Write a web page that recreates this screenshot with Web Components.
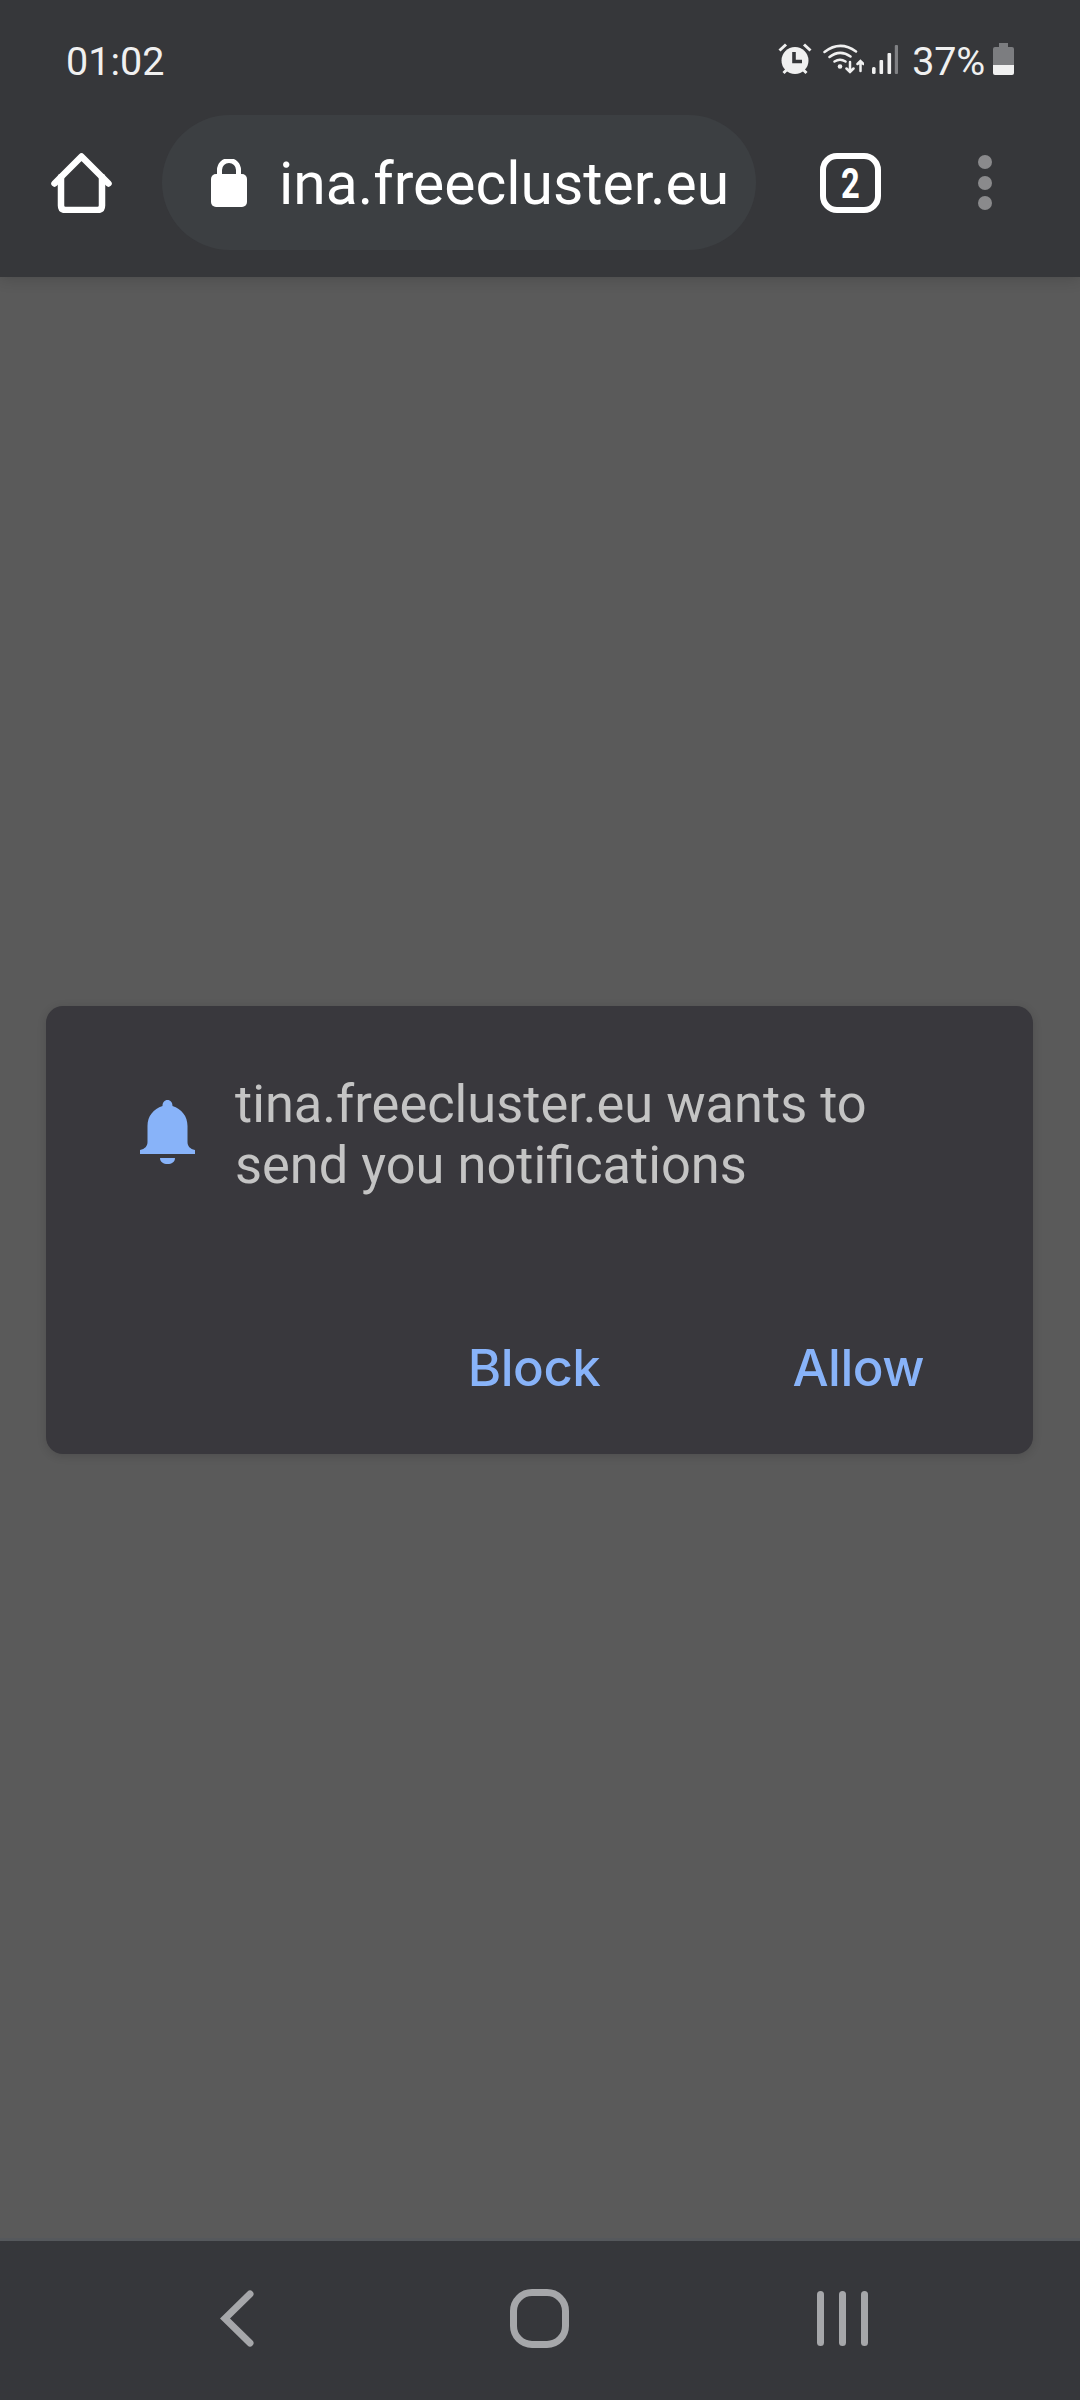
<!DOCTYPE html>
<html lang="en">
<head>
<meta charset="utf-8">
<title>Notification permission</title>
<style>
html,body{margin:0;padding:0;width:1080px;height:2400px;overflow:hidden;background:#5a5a5a;font-family:Roboto,"Liberation Sans",sans-serif}
body{display:flex;flex-direction:column}
</style>
</head>
<body>
<browser-chrome>
  <status-bar time="01:02" battery="37%"></status-bar>
  <browser-toolbar url="ina.freecluster.eu" tabs="2"></browser-toolbar>
</browser-chrome>
<page-area>
  <permission-dialog>
    <span slot="message">tina.freecluster.eu wants to send you notifications</span>
    <dialog-button slot="actions" style="margin-right:192px">Block</dialog-button>
    <dialog-button slot="actions">Allow</dialog-button>
  </permission-dialog>
</page-area>
<nav-bar></nav-bar>
<script>
function def(name, render){
  customElements.define(name, class extends HTMLElement{
    connectedCallback(){
      if(this.shadowRoot) return;
      this.attachShadow({mode:'open'}).innerHTML = render(this);
    }
  });
}
def('browser-chrome', () => `<style>
:host{display:block;background:#36373a;position:relative;z-index:1;box-shadow:0 2px 14px rgba(0,0,0,.16)}
</style><slot></slot>`);

def('status-bar', el => `<style>
:host{display:flex;align-items:flex-start;height:115px;box-sizing:border-box;padding:0 66px 0 66px;color:#f0f0f0}
.time{font-size:39.500px;line-height:44px;margin-top:39.500px;flex:1}
.icons{display:flex;align-items:flex-start;margin-top:43px}
svg{display:block}
.pct{font-size:39.500px;line-height:44px;margin:-3.500px 8px 0 14px;letter-spacing:-.2px}
</style>
<span class="time">${el.getAttribute('time')}</span>
<div class="icons">
<svg width="34" height="32" viewBox="0 0 34 32" fill="none" stroke="#f0f0f0" stroke-width="3">
  <path d="M1.5 7.5 8 1.5M26 1.5l6.5 6M5.5 30l3.5-3.5M28.500 30 25 26.500"/>
  <circle cx="17" cy="17.500" r="13.500" fill="#f0f0f0" stroke="none"/>
  <path d="M16 9v9.500h8" stroke="#36373a" stroke-width="3.600"/>
</svg>
<svg style="margin-left:11px" width="41" height="32" viewBox="0 0 41 32" fill="none" stroke="#f0f0f0" stroke-width="2.500" stroke-linecap="round">
  <path d="M1.500 9Q17-3 33 8.500M6.500 14Q17 6 27.500 13.500M11.500 18.500Q17 15 22.500 18.500"/>
  <circle cx="17" cy="23.500" r="2.300" fill="#f0f0f0" stroke="none"/>
  <path d="M27 19v10M23.500 25.500 27 29l3.500-3.500M37.500 28V18M34.500 21l3-3 3 3"/>
</svg>
<svg style="margin-left:8px" width="26" height="32" viewBox="0 0 26 32">
  <rect x="0" y="24" width="3.600" height="7" rx="1.500" fill="#f0f0f0"/>
  <rect x="7.500" y="17" width="3.600" height="14" rx="1" fill="#f0f0f0"/>
  <rect x="15.500" y="10" width="3.600" height="21" rx="1" fill="#f0f0f0"/>
  <rect x="22.800" y="2" width="3.200" height="29" rx="1" fill="#808184"/>
</svg>
<span class="pct">${el.getAttribute('battery')}</span>
<svg width="21" height="32" viewBox="0 0 21 32">
  <path d="M6 0h9v4h4a2 2 0 0 1 2 2v16H0V6a2 2 0 0 1 2-2h4z" fill="#7c7d80"/>
  <path d="M0 22h21v8a2 2 0 0 1-2 2H2a2 2 0 0 1-2-2z" fill="#f0f0f0"/>
</svg>
</div>`);

def('browser-toolbar', el => `<style>
:host{display:flex;align-items:center;height:135px;padding:0 0 27px 51px;color:#fff}
svg{display:block;flex:none}
.pill{display:flex;align-items:center;width:594px;height:135px;margin-left:50px;background:#3c3f42;border-radius:68px;box-sizing:border-box;padding-left:49px;overflow:hidden;flex:none}
.url{font-size:58.800px;line-height:68px;margin:3px 0 0 32px;white-space:nowrap}
.tab{width:61px;height:60px;box-sizing:border-box;border:6px solid #fff;border-radius:17px;margin-left:64px;display:flex;align-items:center;justify-content:center;flex:none}
.tab span{font-size:43px;font-weight:700;line-height:48px;display:inline-block;transform:scaleX(.76)}
.dots{display:flex;flex-direction:column;gap:6.500px;margin-left:97px}
.dots i{display:block;width:14px;height:14px;border-radius:50%;background:#8a8a8c}
</style>
<svg width="61" height="60" viewBox="0 0 61 60" fill="none" stroke="#fff" stroke-width="6.500" stroke-linecap="round" stroke-linejoin="round">
  <path d="M3.500 30.500 30.500 3.500l27 27"/>
  <path d="M10 24v28.500q0 4.500 4.500 4.500h32q4.500 0 4.500-4.500V24"/>
</svg>
<div class="pill">
  <svg width="36" height="48" viewBox="0 0 36 48">
    <path d="M8.500 18v-7a9.500 9.500 0 0 1 19 0v7" fill="none" stroke="#fff" stroke-width="5"/>
    <rect x="0" y="15" width="36" height="33" rx="5" fill="#fff"/>
  </svg>
  <span class="url">${el.getAttribute('url')}</span>
</div>
<div class="tab"><span>${el.getAttribute('tabs')}</span></div>
<div class="dots"><i></i><i></i><i></i></div>`);

def('page-area', () => `<style>
:host{display:block;flex:1;min-height:0;background:#5a5a5a;padding-top:729px;box-sizing:border-box}
</style><slot></slot>`);

def('permission-dialog', () => `<style>
:host{display:block;margin:0 47px 0 46px;height:448px;box-sizing:border-box;background:#39383d;border-radius:17px;padding:68px 0 0 94px;box-shadow:0 2px 10px rgba(0,0,0,.14)}
.row{display:flex;align-items:flex-start}
svg{display:block;flex:none;margin-top:26px}
.msg{font-size:52.400px;line-height:61px;color:#c4c4c4;margin-left:40px;width:680px}
.actions{display:flex;justify-content:flex-end;margin-top:142px;padding-right:109px}
</style>
<div class="row">
  <svg width="55" height="64" viewBox="0 0 55 64" fill="#88b3f9">
    <path d="M27.500 0C30.500 0 32.500 2.500 32.500 6C41.500 9 47.500 16 47.500 26V42C47.500 46 50 49 55 50V54H0V50C5 49 7.500 46 7.500 42V26C7.500 16 13.500 9 22.500 6C22.500 2.500 24.500 0 27.500 0Z"/>
    <path d="M20 58H35C35 62 31.500 64 27.500 64C23.500 64 20 62 20 58Z"/>
  </svg>
  <div class="msg"><slot name="message"></slot></div>
</div>
<div class="actions"><slot name="actions"></slot></div>`);

def('dialog-button', () => `<style>
:host{display:block;font-family:Inter,Roboto,sans-serif;font-size:51px;letter-spacing:-.5px;line-height:60px;font-weight:500;color:#88b3f9}
</style><slot></slot>`);

def('nav-bar', () => `<style>
:host{display:flex;align-items:center;height:162px;box-sizing:border-box;background:#36373b;border-top:3px solid #55585c;padding:0 0 4px 220px;flex:none}
svg{display:block;flex:none}
.home{width:59px;height:59px;box-sizing:border-box;border:7px solid #a6a7aa;border-radius:22px;margin-left:256px;flex:none}
.rec{margin-left:248px}
</style>
<svg width="34" height="57" viewBox="0 0 34 57" fill="none" stroke="#a6a7aa" stroke-width="7" stroke-linecap="round">
  <path d="M30 4 5 28.500 30 53"/>
</svg>
<div class="home"></div>
<svg class="rec" width="51" height="55" viewBox="0 0 51 55" fill="#a6a7aa">
  <rect x="0" width="7" height="55" rx="3.500"/>
  <rect x="22" width="7" height="55" rx="3.500"/>
  <rect x="44" width="7" height="55" rx="3.500"/>
</svg>`);
</script>
</body>
</html>
